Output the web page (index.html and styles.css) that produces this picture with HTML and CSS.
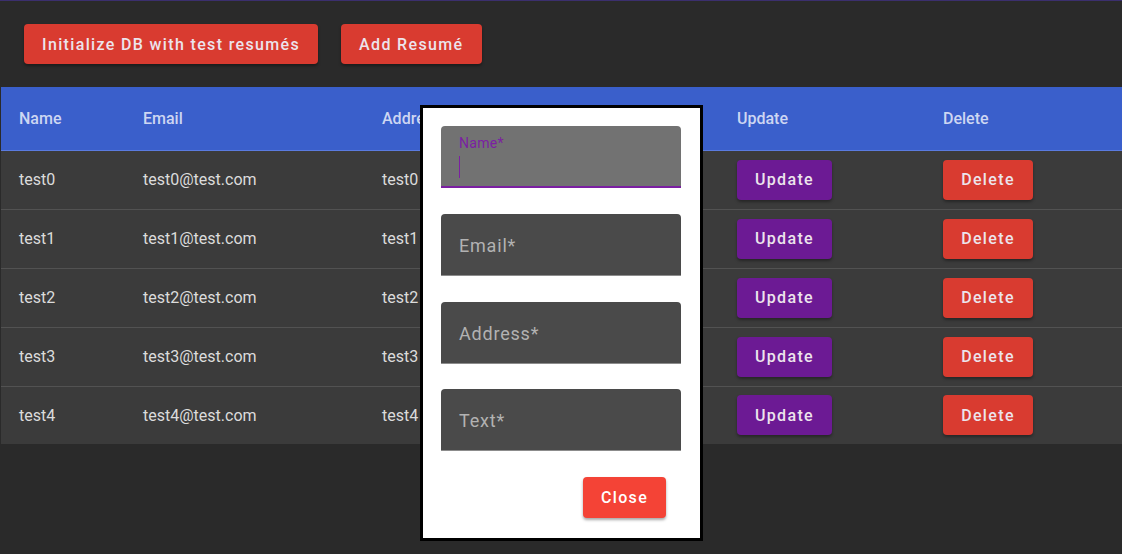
FILE: index.html
```html
<!DOCTYPE html>
<html>
<head>
<meta charset="utf-8">
<link rel="stylesheet" href="styles.css">
</head>
<body>
<div class="app">
  <div class="toolbar">
    <button class="btn btn-red">Initialize DB with test resumés</button>
    <button class="btn btn-red">Add Resumé</button>
  </div>
  <table class="grid">
    <thead>
      <tr><th class="c-name">Name</th><th class="c-email">Email</th><th class="c-addr">Address</th><th class="c-text">Text</th><th class="c-upd">Update</th><th class="c-del">Delete</th></tr>
    </thead>
    <tbody>
      <tr><td>test0</td><td>test0@test.com</td><td>test0</td><td>test0</td><td><button class="btn btn-purple">Update</button></td><td><button class="btn btn-red small">Delete</button></td></tr>
      <tr><td>test1</td><td>test1@test.com</td><td>test1</td><td>test1</td><td><button class="btn btn-purple">Update</button></td><td><button class="btn btn-red small">Delete</button></td></tr>
      <tr><td>test2</td><td>test2@test.com</td><td>test2</td><td>test2</td><td><button class="btn btn-purple">Update</button></td><td><button class="btn btn-red small">Delete</button></td></tr>
      <tr><td>test3</td><td>test3@test.com</td><td>test3</td><td>test3</td><td><button class="btn btn-purple">Update</button></td><td><button class="btn btn-red small">Delete</button></td></tr>
      <tr><td>test4</td><td>test4@test.com</td><td>test4</td><td>test4</td><td><button class="btn btn-purple">Update</button></td><td><button class="btn btn-red small">Delete</button></td></tr>
    </tbody>
  </table>
</div>
<div class="modal">
  <div class="field focused">
    <span class="label-small">Name*</span>
    <span class="caret"></span>
  </div>
  <div class="field"><span class="label">Email*</span></div>
  <div class="field"><span class="label">Address*</span></div>
  <div class="field"><span class="label">Text*</span></div>
  <div class="actions"><button class="btn btn-close">Close</button></div>
</div>
</body>
</html>
```
FILE: styles.css
```css
* { box-sizing: border-box; }
html, body { margin: 0; padding: 0; }
body {
  background: #2a2a2a;
  font-family: Roboto, "Liberation Sans", sans-serif;
  color: #dcdcdc;
  height: 554px;
  overflow: hidden;
  position: relative;
  border-top: 1px solid #3b2f6e;
}
.toolbar {
  display: flex;
  gap: 23px;
  padding: 23px 24px 23px 24px;
}
.btn {
  font-family: Roboto, "Liberation Sans", sans-serif;
  font-weight: 500;
  font-size: 16px;
  letter-spacing: 1.35px;
  border: none;
  border-radius: 4px;
  height: 40px;
  padding: 0 18px;
  color: #ece4ec;
  box-shadow: 0 2px 3px rgba(0,0,0,0.35);
  cursor: pointer;
}
.btn-red { background: #d93b30; }
.btn-purple { background: #6c1a94; width: 95px; padding: 0; }
.btn.small { width: 90px; padding: 0; }
.grid {
  width: calc(100% - 1px);
  margin-left: 1px;
  border-collapse: collapse;
  table-layout: fixed;
}
.grid thead tr {
  background: #3a5fcb;
  height: 63px;
  border-bottom: 1px solid #5a7be0;
}
.grid th {
  text-align: left;
  font-weight: 500;
  font-size: 16px;
  color: #cdd6f2;
  padding: 0 0 0 18px;
}
.c-name { width: 124px; }
.c-email { width: 239px; }
.c-addr { width: 177px; }
.c-text { width: 178px; }
.c-upd { width: 206px; }
.grid tbody tr {
  background: #3b3b3b;
  height: 59px;
  border-bottom: 1px solid #525252;
}
.grid tbody tr:last-child { border-bottom: none; height: 58px; }
.grid td {
  font-size: 16px;
  padding: 0 0 0 18px;
  color: #dcdcdc;
}
.modal {
  position: absolute;
  left: 420px;
  top: 104px;
  width: 283px;
  height: 436px;
  background: #ffffff;
  border: 3px solid #000;
  padding: 18px 19px 0 18px;
  display: flex;
  flex-direction: column;
  gap: 26px;
}
.field {
  height: 62px;
  flex: none;
  background: #4a4a4a;
  border-radius: 4px 4px 0 0;
  border-bottom: 1px solid #8c8c8c;
  position: relative;
  display: flex;
  align-items: center;
  padding-left: 18px;
  padding-top: 2px;
}
.field:nth-child(4) { margin-top: -1px; }
.field.focused {
  background: #727272;
  border-bottom: 2px solid #7b1fa2;
  display: block;
  padding-top: 8px;
}
.label {
  font-size: 18px;
  color: #b2b2b2;
  letter-spacing: 0.8px;
}
.label-small {
  display: block;
  font-size: 14px;
  color: #7b1fa2;
  line-height: 18px;
  letter-spacing: 0.3px;
}
.caret {
  display: block;
  width: 1px;
  height: 22px;
  margin-top: 4px;
  background: #7b1fa2;
}
.actions {
  display: flex;
  justify-content: flex-end;
  padding-right: 15px;
}
.btn-close {
  background: #f44336;
  color: #ffffff;
  height: 41px;
  width: 83px;
  padding: 0;
}
```
